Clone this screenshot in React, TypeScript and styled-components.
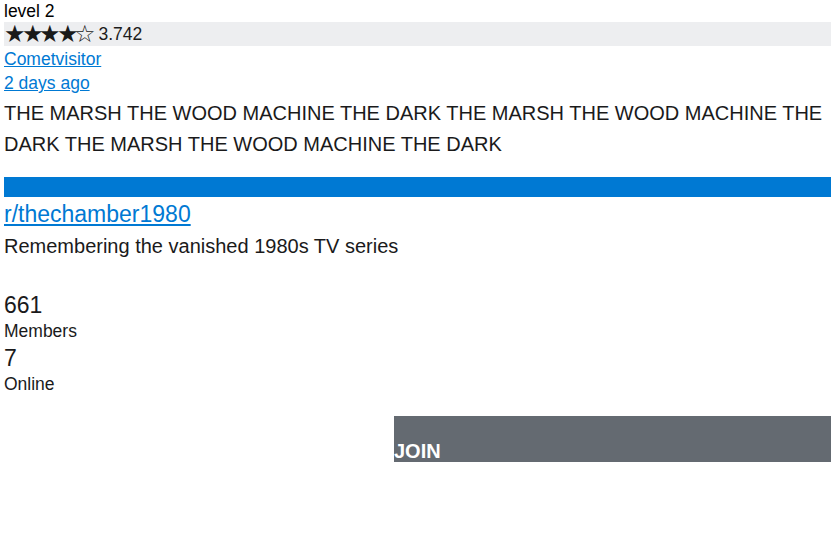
import React from "react";
import styled, { createGlobalStyle } from "styled-components";

const GlobalStyle = createGlobalStyle`
  body {
    margin: 0;
    font-family: "Liberation Sans", Arial, sans-serif;
    color: #1a1a1b;
    background: #fff;
  }
`;

const Page = styled.div`
  width: 827px;
  padding: 0 0 0 4px;
  display: flex;
  flex-direction: column;
  align-items: stretch;
`;

const Level = styled.div`
  font-size: 17.5px;
  line-height: 22px;
  color: #000;
`;

const RatingBar = styled.div`
  background: #edeef0;
  font-size: 17.5px;
  line-height: 24px;
  height: 24px;
  display: flex;
  align-items: center;
  gap: 7px;
  color: #1c1c1c;
  margin-bottom: 1px;
`;

const Stars = styled.span`
  font-size: 24px;
  line-height: 24px;
  letter-spacing: -4.5px;
  color: #1a1a1a;
`;

const Link = styled.a`
  align-self: flex-start;
  color: #0079d3;
  font-size: 17.5px;
  line-height: 24px;
  text-decoration: underline;
`;

const Body = styled.p`
  margin: 3px 0 0;
  font-size: 20px;
  line-height: 31px;
  color: #1a1a1b;
`;

const Banner = styled.div`
  margin-top: 17px;
  height: 20px;
  background: #0079d3;
`;

const SubLink = styled(Link)`
  font-size: 23px;
  line-height: 34px;
`;

const Desc = styled.div`
  font-size: 20px;
  line-height: 30px;
  margin-bottom: 30px;
`;

const StatNum = styled.div`
  font-size: 23px;
  line-height: 28px;
`;

const StatLabel = styled.div`
  font-size: 17.5px;
  line-height: 25px;
`;

const JoinRow = styled.div`
  display: flex;
  justify-content: flex-end;
  margin-top: 19px;
`;

const JoinButton = styled.button`
  width: 437px;
  height: 46px;
  border: none;
  background: #646a71;
  color: #fff;
  font-family: "Liberation Sans", Arial, sans-serif;
  font-weight: bold;
  font-size: 20px;
  line-height: 22px;
  display: flex;
  align-items: flex-end;
  padding: 0;
`;

export default function App() {
  return (
    <>
      <GlobalStyle />
      <Page>
        <Level>level 2</Level>
        <RatingBar>
          <Stars>★★★★☆</Stars>
          <span>3.742</span>
        </RatingBar>
        <Link href="#">Cometvisitor</Link>
        <Link href="#">2 days ago</Link>
        <Body>
          THE MARSH THE WOOD MACHINE THE DARK THE MARSH THE WOOD MACHINE THE DARK THE
          MARSH THE WOOD MACHINE THE DARK
        </Body>
        <Banner />
        <SubLink href="#">r/thechamber1980</SubLink>
        <Desc>Remembering the vanished 1980s TV series</Desc>
        <StatNum>661</StatNum>
        <StatLabel>Members</StatLabel>
        <StatNum>7</StatNum>
        <StatLabel>Online</StatLabel>
        <JoinRow>
          <JoinButton>JOIN</JoinButton>
        </JoinRow>
      </Page>
    </>
  );
}
